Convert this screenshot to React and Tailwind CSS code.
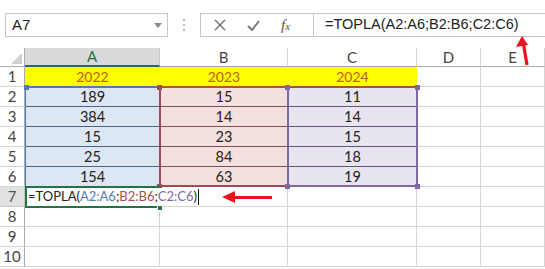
import React from 'react';

// Veri: A2:C6
const DATA = [
  [189, 15, 11],
  [384, 14, 14],
  [15, 23, 15],
  [25, 84, 18],
  [154, 63, 19],
];

const COLS = ['A', 'B', 'C', 'D', 'E'];

function Corner({ className }) {
  return <span className={`absolute w-[5px] h-[5px] ${className}`} />;
}

function TopBar() {
  return (
    <div className="h-[48px] flex items-start pt-[13px] pl-[5px] font-['Liberation_Sans',sans-serif]">
      {/* Name box */}
      <div className="w-[163px] h-[24px] border border-[#c6c6c6] flex items-center justify-between pl-[6px] pr-[5px]">
        <span className="text-[15px] text-[#222]">A7</span>
        <svg width="8" height="5" viewBox="0 0 8 5"><path d="M0 0h8L4 5z" fill="#8a8a8a" /></svg>
      </div>
      {/* Ayırıcı noktalar */}
      <div className="w-[32px] h-[24px] flex flex-col items-center justify-center gap-[3px]">
        <span className="w-[2px] h-[2px] bg-[#b5b5b5]" />
        <span className="w-[2px] h-[2px] bg-[#b5b5b5]" />
        <span className="w-[2px] h-[2px] bg-[#b5b5b5]" />
      </div>
      {/* İptal / Gir / fx */}
      <div className="w-[113px] h-[24px] border border-r-0 border-[#c6c6c6] flex items-center">
        <svg className="ml-[13px]" width="12" height="12" viewBox="0 0 12 12">
          <path d="M1 1l10 10M11 1L1 11" stroke="#6d6d6d" strokeWidth="1.4" />
        </svg>
        <svg className="ml-[21px]" width="13" height="11" viewBox="0 0 13 11">
          <path d="M1 6l4 4 7-9" stroke="#7a7a7a" strokeWidth="2" fill="none" />
        </svg>
        <span className="ml-[21px] text-[15px] italic text-[#555] font-['Liberation_Serif',serif] leading-none">
          f<span className="text-[11px]">x</span>
        </span>
      </div>
      {/* Formül çubuğu */}
      <div className="flex-1 h-[24px] border border-r-0 border-[#c6c6c6] flex items-center pl-[11px]">
        <span className="text-[14.5px] text-[#222]">=TOPLA(A2:A6;B2:B6;C2:C6)</span>
      </div>
    </div>
  );
}

function HeaderRow() {
  return (
    <>
      <div className="relative bg-white border-r border-b border-[#ababab]">
        <svg className="absolute right-[2px] bottom-[2px]" width="11" height="11" viewBox="0 0 11 11">
          <path d="M11 0v11H0z" fill="#d0d0d0" />
        </svg>
      </div>
      {COLS.map((c) =>
        c === 'A' ? (
          <div key={c} className="bg-[#dadada] border-r border-[#c6c6c6] border-b-2 border-b-[#217346] flex items-center justify-center text-[15px] text-[#217346]">
            {c}
          </div>
        ) : (
          <div key={c} className="bg-white border-r border-[#d4d4d4] border-b border-b-[#ababab] flex items-center justify-center text-[15px] text-[#444]">
            {c}
          </div>
        )
      )}
    </>
  );
}

function RowHead({ n, active }) {
  return (
    <div
      className={
        active
          ? 'bg-[#e1e1e1] border-r border-[#c6c6c6] border-b flex items-center justify-center text-[15px] text-[#3f5a4b]'
          : 'bg-white border-r border-[#ababab] border-b border-b-[#d4d4d4] flex items-center justify-center text-[15px] text-[#444]'
      }
    >
      {n}
    </div>
  );
}

function Empty() {
  return <div className="border-r border-b border-[#d4d4d4]" />;
}

export default function App() {
  return (
    <div className="w-[545px] h-[269px] overflow-hidden bg-white relative font-['Lato',sans-serif]">
      <TopBar />

      <div className="relative grid grid-cols-[25px_135px_128px_129px_64px_64px] grid-rows-[19px_repeat(10,20px)]">
        <HeaderRow />

        {/* Satır 1: yıllar */}
        <RowHead n={1} />
        {['2022', '2023', '2024'].map((y) => (
          <div key={y} className="bg-[#ffff00] border-b border-[#d4d4d4] flex items-center justify-center text-[14px] text-[#c55a11]">
            {y}
          </div>
        ))}
        <Empty />
        <Empty />

        {/* Satır 2-6 */}
        {DATA.map((r, i) => (
          <React.Fragment key={i}>
            <RowHead n={i + 2} />
            <div className="bg-[#dde7f3] border-b border-[#4b6680] flex items-center justify-center text-[14.5px] text-[#222]">{r[0]}</div>
            <div className="bg-[#f4e0df] border-b border-[#7a5058] flex items-center justify-center text-[14.5px] text-[#222]">{r[1]}</div>
            <div className="bg-[#e8e4f0] border-b border-[#5e5474] flex items-center justify-center text-[14.5px] text-[#222]">{r[2]}</div>
            <Empty />
            <Empty />
          </React.Fragment>
        ))}

        {/* Satır 7: formül girilen hücre */}
        <RowHead n={7} active />
        <div className="border-b border-[#d4d4d4]" />
        <div className="border-r border-b border-[#d4d4d4]" />
        <Empty />
        <Empty />
        <Empty />

        {[8, 9, 10].map((n) => (
          <React.Fragment key={n}>
            <RowHead n={n} />
            <Empty />
            <Empty />
            <Empty />
            <Empty />
            <Empty />
          </React.Fragment>
        ))}

        {/* Başvuru aralığı vurguları */}
        <div className="absolute left-[25px] top-[38px] w-[136px] h-[101px] border border-t-2 border-[#4f7cac] pointer-events-none" />
        <div className="absolute left-[159px] top-[38px] w-[130px] h-[101px] border-2 border-[#9b4d58] border-t-[#b4562a] pointer-events-none" />
        <div className="absolute left-[287px] top-[38px] w-[131px] h-[101px] border-2 border-[#7d68a3] border-t-[#a0582e] pointer-events-none" />
        <Corner className="left-[24px] top-[37px] bg-[#4f7cac]" />
        <Corner className="left-[157px] top-[37px] bg-[#9b4d58]" />
        <Corner className="left-[157px] top-[136px] bg-[#9b4d58]" />
        <Corner className="left-[285px] top-[37px] bg-[#7d68a3]" />
        <Corner className="left-[285px] top-[136px] bg-[#7d68a3]" />
        <Corner className="left-[415px] top-[37px] bg-[#7d68a3]" />
        <Corner className="left-[415px] top-[136px] bg-[#7d68a3]" />

        {/* Etkin hücre A7 (düzenleme modunda) */}
        <div className="absolute left-[25px] top-[138px] w-[136px] h-[22px] border-2 border-r-0 border-[#217346] pointer-events-none" />
        <span className="absolute left-[157px] top-[157px] w-[6px] h-[6px] bg-[#217346] border border-white" />
        <div className="absolute left-[27px] top-[140px] h-[18px] flex items-center pl-[1px] pr-[1px] bg-white text-[13px] whitespace-nowrap text-[#222]">
          <span>=TOPLA(</span>
          <span className="text-[#4f7cac]">A2:A6</span>
          <span>;</span>
          <span className="text-[#a44f58]">B2:B6</span>
          <span>;</span>
          <span className="text-[#7d68a3]">C2:C6</span>
          <span>)</span>
          <span className="ml-[1px] w-[1px] h-[16px] bg-[#111]" />
        </div>
      </div>

      {/* Kırmızı oklar */}
      <svg className="absolute left-[513px] top-[34px]" width="20" height="32" viewBox="0 0 20 32">
        <path d="M14 31L10.5 10" stroke="#e8141b" strokeWidth="3.2" />
        <path d="M9 2l-6 11 12-2z" fill="#e8141b" />
      </svg>
      <svg className="absolute left-[220px] top-[190px]" width="54" height="14" viewBox="0 0 54 14">
        <path d="M12 7.5h40" stroke="#e8141b" strokeWidth="3.2" />
        <path d="M2 7l13-6v12z" fill="#e8141b" />
      </svg>
    </div>
  );
}
